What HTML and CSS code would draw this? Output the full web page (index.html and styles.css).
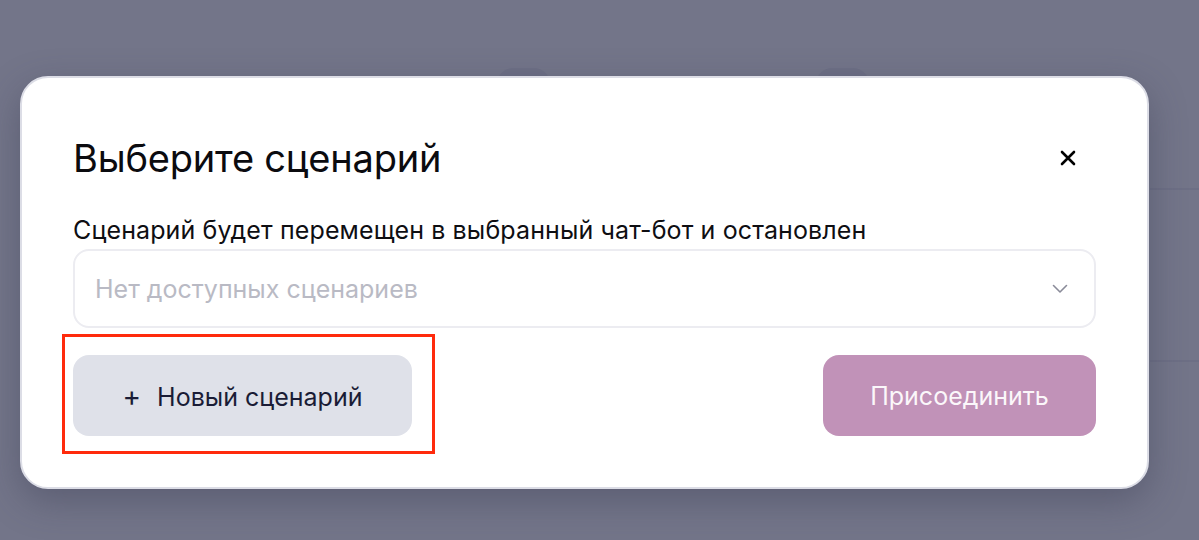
FILE: index.html
```html
<!DOCTYPE html>
<html lang="ru">
<head>
  <meta charset="UTF-8">
  <title>Выберите сценарий</title>
  <link rel="stylesheet" href="styles.css">
</head>
<body>
<div class="backdrop">
  <span class="bump bump-left"></span>
  <span class="bump bump-right"></span>
  <span class="line line-top"></span>
  <span class="line line-bottom"></span>

  <div class="modal">
    <div class="modal-head">
      <h2 class="modal-title">Выберите сценарий</h2>
      <button class="close" type="button">
        <svg width="16" height="16" viewBox="0 0 16 16"><path d="M2 2 L14 14 M14 2 L2 14" stroke="#000" stroke-width="2.6" stroke-linecap="round"/></svg>
      </button>
    </div>
    <p class="modal-text">Сценарий будет перемещен в выбранный чат-бот и остановлен</p>
    <div class="select">
      <span class="placeholder">Нет доступных сценариев</span>
      <svg class="chevron" width="16" height="10" viewBox="0 0 16 10"><path d="M1.5 1.5 L8 8 L14.5 1.5" fill="none" stroke="#8a8b99" stroke-width="1.6" stroke-linecap="round" stroke-linejoin="round"/></svg>
    </div>
    <div class="actions">
      <div class="highlight">
        <button class="btn btn-new" type="button"><span class="plus">+</span>Новый сценарий</button>
      </div>
      <button class="btn btn-join" type="button">Присоединить</button>
    </div>
  </div>
</div>
</body>
</html>
```

FILE: styles.css
```css
* {
  margin: 0;
  padding: 0;
  box-sizing: border-box;
}

body {
  width: 1199px;
  height: 540px;
  overflow: hidden;
  background: #737589;
  font-family: Inter, "Noto Sans", sans-serif;
}

.backdrop {
  position: relative;
  height: 540px;
  padding: 76px 50px 0 20px;
}

/* faint page pieces under the overlay */
.bump {
  position: absolute;
  top: 68px;
  width: 53px;
  height: 20px;
  border-radius: 16px 16px 0 0;
  background: #6d6f85;
}

.bump-left { left: 497px; }
.bump-right { left: 816px; }

.line {
  position: absolute;
  left: 1150px;
  right: 0;
  height: 2px;
  background: #6d6f85;
}

.line-top { top: 188px; }
.line-bottom { top: 360px; }

.modal {
  position: relative;
  width: 1129px;
  height: 413px;
  background: #fff;
  border: 2px solid #dcdde6;
  border-radius: 28px;
  padding: 58px 51px 0;
  box-shadow: 0 12px 36px rgba(55, 57, 80, 0.4);
}

.modal-head {
  display: flex;
  align-items: center;
  justify-content: space-between;
  height: 44px;
}

.modal-title {
  font-size: 38px;
  line-height: 44px;
  font-weight: 400;
  color: #0b0b0f;
  letter-spacing: -0.2px;
}

.close {
  border: 0;
  background: none;
  width: 16px;
  height: 16px;
  margin-right: 20px;
  display: flex;
}

.modal-text {
  font-size: 25px;
  color: #0e0e12;
  line-height: 30px;
  letter-spacing: 0.12px;
  margin-top: 35px;
}

.select {
  display: flex;
  align-items: center;
  justify-content: space-between;
  height: 79px;
  margin-top: 4px;
  padding: 0 26px 0 20px;
  border: 2px solid #ececf1;
  border-radius: 16px;
}

.placeholder {
  font-size: 25px;
  color: #b9bac4;
}

.actions {
  display: flex;
  justify-content: space-between;
  margin-top: 27px;
}

.highlight {
  position: relative;
}

.highlight::after {
  content: "";
  position: absolute;
  left: -11px;
  top: -21px;
  right: -23px;
  bottom: -18px;
  border: 3px solid #ff2a0c;
}

.btn {
  height: 81px;
  border: 0;
  border-radius: 16px;
  font-family: inherit;
  font-size: 25px;
}

.btn-new {
  width: 339px;
  background: #dfe1e9;
  color: #1a1c36;
}

.plus {
  font-size: 28px;
  margin-right: 16px;
}

.btn-join {
  width: 273px;
  background: #c192b8;
  color: #fbf7fa;
}
```
